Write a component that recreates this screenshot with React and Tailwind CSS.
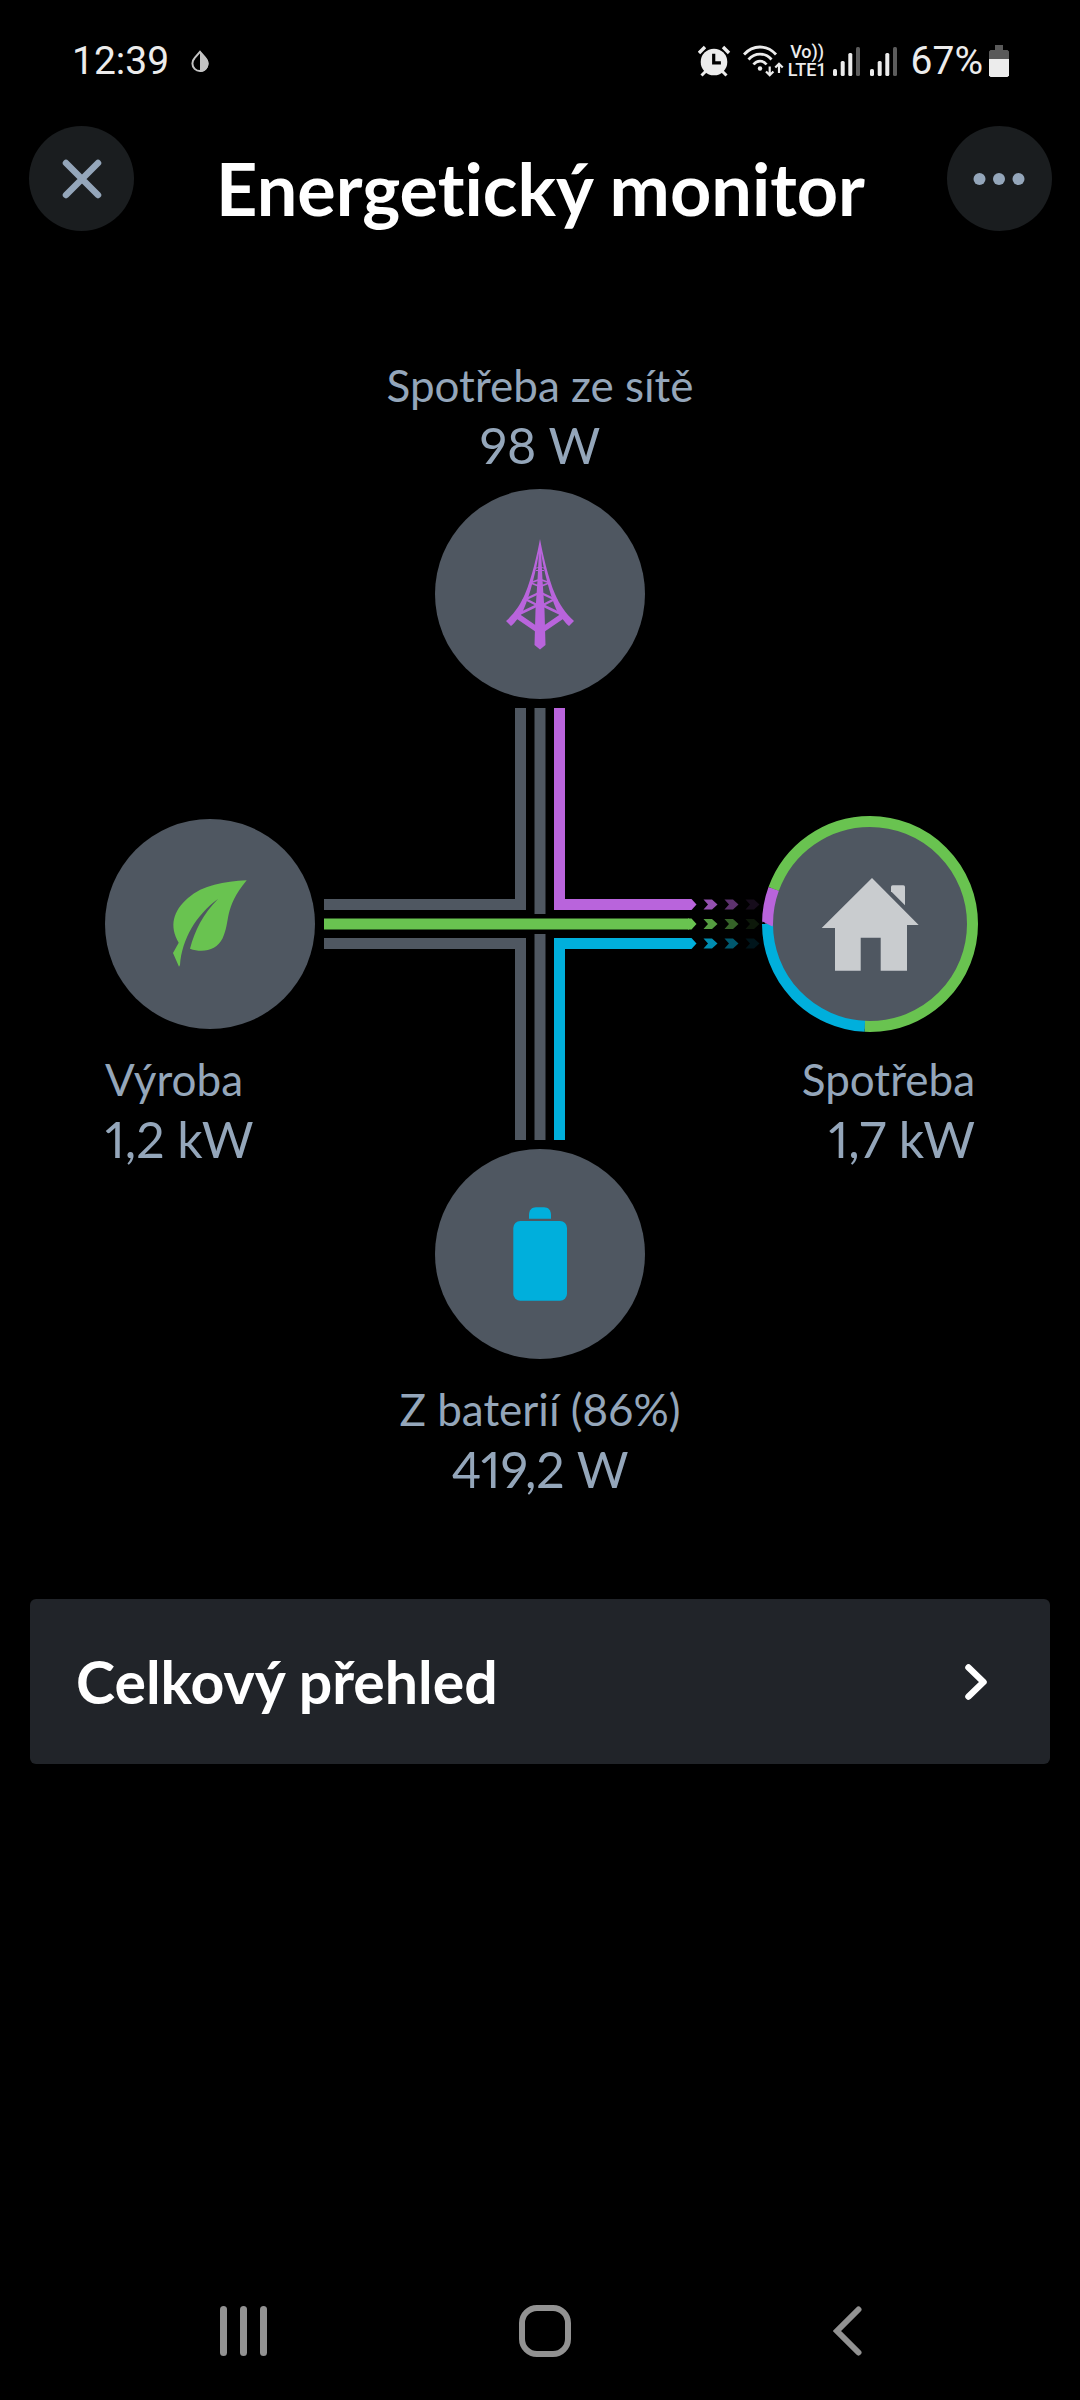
const COLORS = {
  grid: '#b964dc',
  solar: '#69c350',
  battery: '#00afdc',
  idle: '#4f5761',
};

function AlarmIcon() {
  return (
    <svg width="33" height="32" viewBox="0 0 33 32" fill="none" aria-hidden="true">
      <circle cx="16" cy="17" r="13.3" fill="#ececec" />
      <path d="M15.7 8.7v9.2h7.2" stroke="#000" strokeWidth="3.2" />
      <path d="M1 8l6-6M31 8l-6-6" stroke="#ececec" strokeWidth="3.4" />
      <path d="M3.5 30.5L8 26M28.5 30.5L24 26" stroke="#ececec" strokeWidth="3" />
    </svg>
  );
}

function WifiIcon() {
  return (
    <svg width="41" height="32" viewBox="0 0 41 32" fill="none" stroke="#ececec" aria-hidden="true">
      <path d="M1 9.5C10-.5 24-.5 33 9.5" strokeWidth="2.8" />
      <path d="M5.5 14.5C12 7.2 22 7.2 28.5 14.5" strokeWidth="2.8" />
      <path d="M10.5 19.5C14 15 20 15 23.5 19.5" strokeWidth="2.8" />
      <circle cx="17" cy="23.5" r="2.2" fill="#ececec" stroke="none" />
      <path d="M26.7 21.5v8.5M23 26.5l3.7 3.7 3.7-3.7" strokeWidth="2.2" />
      <path d="M36 28V19M32.3 22.5l3.7-3.7 3.7 3.7" strokeWidth="2.2" />
    </svg>
  );
}

function SignalIcon() {
  return (
    <svg width="27" height="29" viewBox="0 0 27 29" aria-hidden="true">
      <rect x="0" y="22" width="4" height="7" rx="1.5" fill="#ececec" />
      <rect x="7.7" y="14" width="4" height="15" rx="1.5" fill="#ececec" />
      <rect x="15.3" y="6" width="4" height="23" rx="1.5" fill="#ececec" />
      <rect x="23" y="0" width="4" height="29" rx="1.5" fill="#5c5c5c" />
    </svg>
  );
}

function StatusBar() {
  return (
    <div className="flex h-[122px] items-center justify-between pl-[72px] pr-[71px] font-['Roboto',sans-serif] text-[39px] leading-[48px] text-[#ececec]">
      <div className="flex items-center gap-[22px]">
        <span>12:39</span>
        <svg width="18" height="23" viewBox="0 0 18 23" aria-hidden="true">
          <path d="M9 1.8L14.5 8.2A7.6 7.6 0 1 1 3.5 8.2Z" fill="none" stroke="#c4c4c4" strokeWidth="2" />
          <path d="M9 1L15 8A8.2 8.2 0 0 1 9 22Z" fill="#c4c4c4" />
        </svg>
      </div>
      <div className="flex items-center">
        <AlarmIcon />
        <div className="ml-3 mr-1">
          <WifiIcon />
        </div>
        <div className="mr-[6px] flex flex-col items-center text-[18px] font-medium leading-[18px]">
          <span>Vo))</span>
          <span>LTE1</span>
        </div>
        <div className="flex gap-[10px]">
          <SignalIcon />
          <SignalIcon />
        </div>
        <span className="ml-[14px]">67%</span>
        <svg className="ml-[6px]" width="20" height="32" viewBox="0 0 20 32" aria-hidden="true">
          <path d="M6 0h8v5h4.5l1.5 1.5V14H0V6.5L1.5 5H6z" fill="#5a5a5a" />
          <path d="M0 14h20v16.5l-1.5 1.5h-17L0 30.5z" fill="#ececec" />
        </svg>
      </div>
    </div>
  );
}

function Header() {
  return (
    <header className="flex items-start justify-between pl-[29px] pr-7 pt-1">
      <button type="button" aria-label="Zavřít" className="flex size-[105px] items-center justify-center rounded-full bg-[#1a1d1f]">
        <svg width="40" height="40" viewBox="0 0 40 40" stroke="#94a6ba" strokeWidth="6.5" strokeLinecap="round">
          <path d="M4 4l32 32M36 4L4 36" />
        </svg>
      </button>
      <h1 className="pt-[22px] text-[72px] font-bold leading-[80px] text-white">Energetický monitor</h1>
      <button type="button" aria-label="Další možnosti" className="flex size-[105px] items-center justify-center rounded-full bg-[#1a1d1f]">
        <svg width="52" height="12" viewBox="0 0 52 12" fill="#94a6ba">
          <circle cx="6.5" cy="6" r="6" />
          <circle cx="26" cy="6" r="6" />
          <circle cx="45.5" cy="6" r="6" />
        </svg>
      </button>
    </header>
  );
}

function TowerIcon() {
  return (
    <svg width="120" height="140" viewBox="0 4 120 140" fill="none" stroke={COLORS.grid} aria-hidden="true">
      <path
        d="M60 19C57.5 33 51.5 59 45 74C41 83.5 34.5 93.5 26 101L31 106C33.5 104 35.5 101.5 37.5 99L42 93C47 83 54 62 59 33H61C66 62 73 83 78 93L82.5 99C84.5 101.5 86.5 104 89 106L94 101C85.5 93.5 79 83.5 75 74C68.5 59 62.5 33 60 19Z"
        fill={COLORS.grid}
        stroke="none"
      />
      <path d="M59 30h2L62.5 60L64.5 90L65.5 125L60 129.5L54.5 125L55.5 90L57.5 60Z" fill={COLORS.grid} stroke="none" />
      <path d="M55 48.5c3-1.5 7-1.5 10 0M56 50.5h8" strokeWidth="1" />
      <path d="M51 62.5L60 59.5L69 62.5M51 63L60 66.5L69 63" strokeWidth="1.8" />
      <path d="M43 80.5L60 72.5L77 80.5M45 79L60 86.5L75 79" strokeWidth="2.4" />
      <path d="M39 94L60 84L81 94" strokeWidth="2.6" />
      <path d="M36 95L60 111.5L84 95" strokeWidth="5.5" />
    </svg>
  );
}

function LeafIcon() {
  return (
    <svg width="210" height="210" viewBox="0 0 210 210" fill={COLORS.solar} aria-hidden="true">
      <path d="M141.7 61.3C119 62.5 98 66 83 79C68 92 64 107 73.7 123.7L68 134L74 147.7L75 146C77 120 91 96 113 80C98 95 90 111 85 129.7C98 134.5 112 131 117.5 119.5C126 102 118 90 141.7 61.3Z" />
    </svg>
  );
}

function HouseIcon() {
  return (
    <svg width="210" height="210" viewBox="0 0 210 210" fill="#c9cccf" aria-hidden="true">
      <path d="M107 59L153.7 106H142V151.7H115.7V118.7H95.7V151.7H70V109H56.7Z" />
      <path d="M126 68Q126 66.3 127.7 66.3H138.3Q140 66.3 140 68V86.3L126 72.3Z" />
    </svg>
  );
}

function BatteryIcon() {
  return (
    <svg width="210" height="210" viewBox="0 0 210 210" fill={COLORS.battery} aria-hidden="true">
      <path d="M94 69.7V66C94 61 97 58.3 101 58.3H109C113 58.3 116 61 116 66V69.7Z" />
      <rect x="78.3" y="72" width="53.7" height="79.7" rx="7" />
    </svg>
  );
}

// share of each source in the consumption, degrees clockwise from 3 o'clock
const SHARES = [
  { color: COLORS.solar, from: 0, length: 93 },
  { color: COLORS.battery, from: 93, length: 87 },
  { color: COLORS.grid, from: 180, length: 20 },
  { color: COLORS.solar, from: 200, length: 160 },
];

function ShareRing() {
  return (
    <svg className="absolute -inset-[3px]" width="216" height="216" viewBox="0 0 216 216" fill="none" aria-hidden="true">
      {SHARES.map((share) => (
        <circle
          key={share.from}
          cx="108"
          cy="108"
          r="102.5"
          pathLength="360"
          stroke={share.color}
          strokeWidth="11"
          strokeDasharray={`${share.length} 360`}
          strokeDashoffset={-share.from}
        />
      ))}
    </svg>
  );
}

function Node({ children }) {
  return (
    <div className="relative flex size-[210px] shrink-0 items-center justify-center rounded-full bg-[#4f5761]">
      {children}
    </div>
  );
}

function Reading({ label, value }) {
  return (
    <div className="whitespace-nowrap text-[#94a6ba]">
      <div className="text-[44px] leading-[56px]">{label}</div>
      <div className="text-[50px] leading-[64px] proportional-nums">{value}</div>
    </div>
  );
}

const FLOWS = [
  { color: COLORS.grid, y: -19.5 },
  { color: COLORS.solar, y: 0 },
  { color: COLORS.battery, y: 19.5 },
];

function FlowLines() {
  return (
    <svg className="absolute -inset-[111px] overflow-visible" width="432" height="432" viewBox="-216 -216 432 432" fill="none" strokeWidth="11" aria-hidden="true">
      <g stroke={COLORS.idle}>
        <path d="M-19.5 -216V-19.5H-216" />
        <path d="M-19.5 216V19.5H-216" />
        <path d="M0 -216V-10M0 10V216" />
      </g>
      <path d="M19.5 -216V-19.5H149" stroke={COLORS.grid} />
      <path d="M19.5 216V19.5H149" stroke={COLORS.battery} />
      <path d="M-216 0H149" stroke={COLORS.solar} />
      {FLOWS.map(({ color, y }) => (
        <g key={y} fill={color} transform={`translate(0 ${y})`}>
          <path d="M148 -5.5h3.5l5 5.5l-5 5.5H148z" />
          <path d="M163.5 -5h8.5l5.5 5l-5.5 5h-8.5l4.5-5z" opacity="0.8" />
          <path d="M184.5 -5h8.5l5.5 5l-5.5 5h-8.5l4.5-5z" opacity="0.5" />
          <path d="M205.5 -5h8.5l5.5 5l-5.5 5h-8.5l4.5-5z" opacity="0.12" />
        </g>
      ))}
    </svg>
  );
}

function EnergyFlow() {
  return (
    <section className="mt-[126px] grid grid-cols-[210px_210px_210px] grid-rows-[auto_210px_auto] justify-center gap-[120px]">
      <div className="col-start-2 row-start-1 flex flex-col items-center gap-3 text-center">
        <Reading label="Spotřeba ze sítě" value="98 W" />
        <Node>
          <TowerIcon />
        </Node>
      </div>
      <div className="relative col-start-2 row-start-2">
        <FlowLines />
      </div>
      <div className="col-start-1 row-span-2 row-start-2 flex flex-col items-start gap-[22px]">
        <Node>
          <LeafIcon />
        </Node>
        <Reading label="Výroba" value="1,2 kW" />
      </div>
      <div className="col-start-3 row-span-2 row-start-2 flex flex-col items-end gap-[22px] text-right">
        <Node>
          <HouseIcon />
          <ShareRing />
        </Node>
        <Reading label="Spotřeba" value="1,7 kW" />
      </div>
      <div className="col-start-2 row-start-3 flex flex-col items-center gap-[22px] text-center">
        <Node>
          <BatteryIcon />
        </Node>
        <Reading label="Z baterií (86%)" value="419,2 W" />
      </div>
    </section>
  );
}

function SystemNav() {
  return (
    <nav className="mt-auto flex h-[138px] pl-[92px] pr-[82px]">
      <button type="button" aria-label="Poslední aplikace" className="flex flex-1 items-center justify-center gap-[13px]">
        <span className="h-[50px] w-[7px] rounded-full bg-[#929292]" />
        <span className="h-[50px] w-[7px] rounded-full bg-[#929292]" />
        <span className="h-[50px] w-[7px] rounded-full bg-[#929292]" />
      </button>
      <button type="button" aria-label="Domů" className="flex flex-1 items-center justify-center">
        <span className="size-[52px] rounded-[18px] border-[6px] border-[#929292]" />
      </button>
      <button type="button" aria-label="Zpět" className="flex flex-1 items-center justify-center">
        <svg width="29" height="50" viewBox="0 0 29 50" fill="none" stroke="#929292" strokeWidth="6" strokeLinecap="round">
          <path d="M25.5 3.5L4 25L25.5 46.5" />
        </svg>
      </button>
    </nav>
  );
}

export default function App() {
  return (
    <div className="flex min-h-screen flex-col bg-black font-['Lato',sans-serif] [font-variant-ligatures:none]">
      <StatusBar />
      <Header />
      <main>
        <EnergyFlow />
        <button type="button" className="mx-[30px] mt-[98px] flex h-[165px] w-[calc(100%-60px)] items-center justify-between rounded-md bg-[#212429] pl-[46px] pr-[62px] text-white">
          <span className="text-[59px] font-bold leading-[68px]">Celkový přehled</span>
          <svg width="23" height="36" viewBox="0 0 23 36" fill="none" stroke="currentColor" strokeWidth="6.5" strokeLinecap="round" strokeLinejoin="round">
            <path d="M3.5 3.5L18.5 18L3.5 32.5" />
          </svg>
        </button>
      </main>
      <SystemNav />
    </div>
  );
}
